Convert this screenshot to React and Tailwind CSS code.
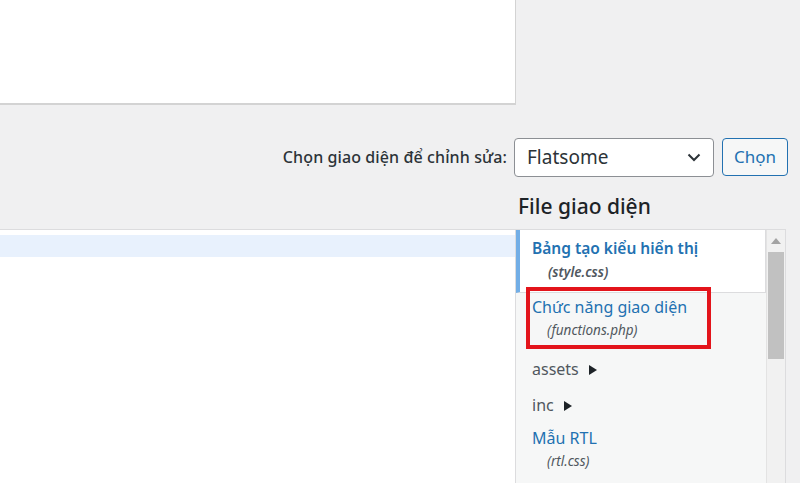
import React from "react";

const font = { fontFamily: '"Noto Sans", "Open Sans", sans-serif' };

function Tri() {
  return (
    <svg width="8" height="10" viewBox="0 0 8 10" className="inline-block ml-[10px] mb-[2px]">
      <path d="M0 0 L8 5 L0 10 Z" fill="#1d2327" />
    </svg>
  );
}

export default function App() {
  return (
    <div className="w-[800px] h-[483px] bg-[#f0f0f1] overflow-hidden relative" style={font}>
      {/* top editor box */}
      <div className="w-[516px] h-[105px] bg-white border-r border-b-2 border-[#d3d3d3]" />

      {/* select row */}
      <div className="flex items-center justify-end h-[40px] mt-[32px] pr-[12px]">
        <span className="text-[16px] text-[#2c3338] font-medium mr-[7px] tracking-[0.1px]">
          Chọn giao diện để chỉnh sửa:
        </span>
        <div className="w-[200px] h-[39px] bg-white border border-[#8c8f94] rounded-[4px] flex items-center justify-between pl-[12px] pr-[12px]">
          <span className="text-[19px] text-[#2c3338]">Flatsome</span>
          <svg width="14" height="9" viewBox="0 0 14 9">
            <path d="M1.5 1.5 L7 7 L12.5 1.5" fill="none" stroke="#2c3338" strokeWidth="2" />
          </svg>
        </div>
        <div className="ml-[8px] w-[66px] h-[38px] bg-[#f6f7f7] border border-[#2271b1] rounded-[4px] flex items-center justify-center text-[17px] text-[#2271b1]">
          Chọn
        </div>
      </div>

      {/* lower grid */}
      <div className="grid grid-cols-[516px_270px_14px] grid-rows-[52px_1fr]">
        <div />
        <div className="flex items-end pb-[9px] pl-[2px] text-[21px] leading-[28px] font-medium text-[#1d2327]">
          File giao diện
        </div>
        <div />

        {/* code editor */}
        <div className="h-[260px] bg-white border-t border-r border-[#dcdcde] pt-[5px]">
          <div className="h-[22px] bg-[#e8f1fd]" />
        </div>

        {/* file list */}
        <div className="relative h-[260px] flex border-t border-r border-[#dcdcde] bg-[#f6f7f7]">
          <div className="flex-1 flex flex-col">
            <div className="h-[63px] bg-white border-l-4 border-[#72aee6] border-b border-r border-b-[#dcdcde] border-r-[#dcdcde] pl-[12px] pt-[7px]">
              <div className="text-[15.5px] leading-[22px] font-semibold text-[#2271b1]">Bảng tạo kiểu hiển thị</div>
              <div className="text-[13.5px] leading-[26px] italic font-semibold text-[#50575e] pl-[16px]">(style.css)</div>
            </div>
            <div className="h-[58px] pl-[16px] pt-[3px]">
              <div className="text-[16px] leading-[22px] text-[#2271b1]">Chức năng giao diện</div>
              <div className="text-[13.5px] leading-[24px] italic text-[#50575e] pl-[15px]">(functions.php)</div>
            </div>
            <div className="h-[37px] pl-[16px] pt-[7px] text-[16px] leading-[22px] text-[#50575e]">
              assets<Tri />
            </div>
            <div className="h-[37px] pl-[16px] pt-[6px] text-[16px] leading-[22px] text-[#50575e]">
              inc<Tri />
            </div>
            <div className="h-[58px] pl-[16px] pt-[2px]">
              <div className="text-[16px] leading-[22px] text-[#2271b1]">Mẫu RTL</div>
              <div className="text-[13.5px] leading-[24px] italic text-[#50575e] pl-[15px]">(rtl.css)</div>
            </div>
          </div>
          {/* scrollbar */}
          <div className="w-[19px] bg-[#f1f1f1] border-l border-[#e3e3e3] flex flex-col items-center">
            <svg width="10" height="6" viewBox="0 0 10 6" className="mt-[8px]">
              <path d="M0 6 L5 0 L10 6 Z" fill="#a3a3a3" />
            </svg>
            <div className="mt-[8px] w-[16px] h-[107px] bg-[#c1c1c1]" />
          </div>

          {/* red highlight box */}
          <div className="absolute left-[10px] top-[57px] w-[185px] h-[62px] border-4 border-[#e3141b]" />
        </div>
        <div />
      </div>
    </div>
  );
}
